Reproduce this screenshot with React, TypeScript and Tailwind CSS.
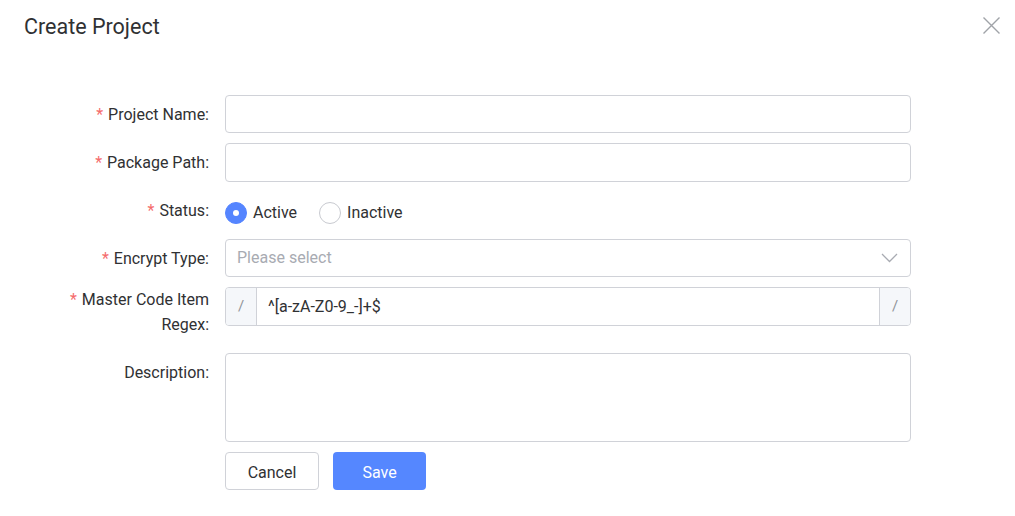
import React from "react";

const font = { fontFamily: "Roboto, 'Noto Sans', sans-serif" };

function Label({ text, required, lines = 1 }: { text: string; required?: boolean; lines?: number }) {
  return (
    <div
      className={
        "w-[161px] shrink-0 pr-4 text-right text-[16px] text-[#303133] " +
        (lines > 1 ? "leading-[25px]" : "leading-[39px]")
      }
    >
      {required && <span className="text-[#f56c6c] mr-[5px]">*</span>}
      {text}
    </div>
  );
}

function Radio({ checked, label }: { checked?: boolean; label: string }) {
  return (
    <label className="flex items-center gap-[6px] cursor-pointer">
      <span
        className={
          "w-[22px] h-[22px] rounded-full flex items-center justify-center " +
          (checked ? "bg-[#5585ff] border border-[#5585ff]" : "bg-white border border-[#c8cad0]")
        }
      >
        {checked && <span className="w-[6px] h-[6px] rounded-full bg-white" />}
      </span>
      <span className="text-[16px] text-[#303133]">{label}</span>
    </label>
  );
}

export default function App() {
  return (
    <div className="w-[1015px] h-[516px] bg-white relative overflow-hidden" style={font}>
      <div className="px-6 pt-[13px]">
        <h2 className="text-[21.5px] leading-[28px] text-[#303133]">Create Project</h2>
      </div>
      <button className="absolute right-[14px] top-[15px] w-[20px] h-[20px] flex items-center justify-center text-[#a0a3a8]">
        <svg width="19" height="19" viewBox="0 0 19 19" fill="none" stroke="currentColor" strokeWidth="1.4">
          <path d="M1.5 1.5 L17.5 17.5 M17.5 1.5 L1.5 17.5" />
        </svg>
      </button>

      <form className="pl-[64px] pt-[54px] flex flex-col">
        {/* Project Name */}
        <div className="flex">
          <Label text="Project Name:" required />
          <input className="w-[686px] h-[38px] rounded-[4px] border border-[#d0d2d8] px-[11px] outline-none" />
        </div>

        {/* Package Path */}
        <div className="flex mt-[9px]">
          <Label text="Package Path:" required />
          <input className="w-[686px] h-[39px] rounded-[4px] border border-[#d0d2d8] px-[11px] outline-none" />
        </div>

        {/* Status */}
        <div className="flex mt-[9px] h-[38px]">
          <Label text="Status:" required />
          <div className="flex items-center gap-[22px] pt-[6px]">
            <Radio checked label="Active" />
            <Radio label="Inactive" />
          </div>
        </div>

        {/* Encrypt Type */}
        <div className="flex mt-[10px]">
          <Label text="Encrypt Type:" required />
          <div className="w-[686px] h-[38px] rounded-[4px] border border-[#d0d2d8] pl-[11px] pr-[12px] flex items-center justify-between">
            <span className="text-[16px] text-[#a8abb2]">Please select</span>
            <svg width="17" height="10" viewBox="0 0 17 10" fill="none" stroke="#a8abb2" strokeWidth="1.3">
              <path d="M1 1 L8.5 8.5 L16 1" />
            </svg>
          </div>
        </div>

        {/* Master Code Item Regex */}
        <div className="flex mt-[9px]">
          <Label text="Master Code Item Regex:" required lines={2} />
          <div className="w-[686px] h-[39px] rounded-[4px] border border-[#d0d2d8] flex overflow-hidden">
            <div className="w-[31px] bg-[#f5f7fa] border-r border-[#d0d2d8] flex items-center justify-center text-[15px] text-[#909399]">
              /
            </div>
            <div className="flex-1 flex items-center px-[11px] text-[16px] text-[#303133]">^[a-zA-Z0-9_-]+$</div>
            <div className="w-[31px] bg-[#f5f7fa] border-l border-[#d0d2d8] flex items-center justify-center text-[15px] text-[#909399]">
              /
            </div>
          </div>
        </div>

        {/* Description */}
        <div className="flex mt-[16px]">
          <div className="pt-[7px]">
            <Label text="Description:" lines={2} />
          </div>
          <textarea className="w-[686px] h-[89px] rounded-[4px] border border-[#d0d2d8] px-[11px] py-[6px] outline-none resize-none" />
        </div>

        {/* Actions */}
        <div className="flex mt-[10px] pl-[161px] gap-[14px]">
          <button
            type="button"
            className="w-[94px] h-[38px] pt-[3px] rounded-[4px] border border-[#d0d2d8] bg-white text-[16px] text-[#303133]"
          >
            Cancel
          </button>
          <button type="button" className="w-[93px] h-[38px] pt-[3px] rounded-[4px] bg-[#5587ff] text-[16px] text-white">
            Save
          </button>
        </div>
      </form>
    </div>
  );
}
